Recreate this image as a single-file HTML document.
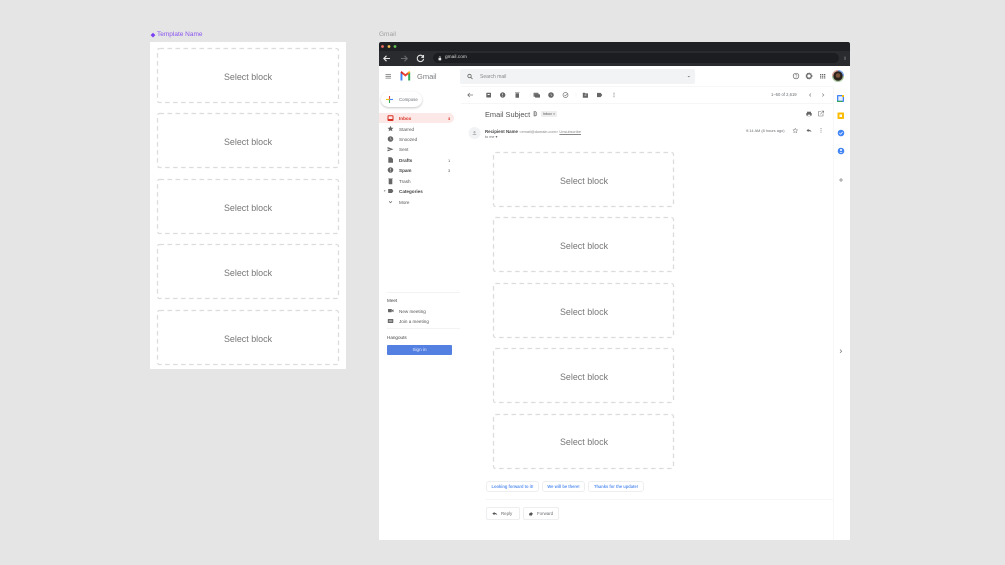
<!DOCTYPE html>
<html><head><meta charset="utf-8">
<style>
html,body{margin:0;padding:0;background:#e5e5e5}
body{width:1005px;height:565px;position:relative;overflow:hidden;font-family:"Liberation Sans",sans-serif;color:#5f6368}
#w{position:absolute;left:0;top:0;width:1005px;height:565px;background:#e5e5e5;filter:blur(.35px)}
div,span{position:absolute;white-space:nowrap}
svg{position:absolute;left:0;top:0}
.t{font-size:4.6px;line-height:7px;color:#555}
.block{box-sizing:border-box;width:182px;height:56px;border-radius:2px;text-align:center;font-size:8.9px;color:#777;line-height:56px;letter-spacing:.02px}
.g{font-size:4.6px;line-height:6px;color:#6a6d71}
.chip{height:11px;box-sizing:border-box;border:1px solid #eceef0;border-radius:3px;font-size:4.1px;font-weight:bold;color:#5a92f0;line-height:9px;text-align:center;background:#fff}
.btn{height:13px;box-sizing:border-box;border:1px solid #eceef0;border-radius:2px;background:#fff}
</style></head><body><div id="w">
<div style="left:157px;top:31px;font-size:6.5px;line-height:8px;color:#8a55ee">Template Name</div>
<div style="left:150px;top:42px;width:196px;height:327px;background:#fff"></div>
<div style="left:379px;top:42px;width:471px;height:498px;background:#fff"></div>
<svg width="1005" height="565" style="z-index:1">
<path d="M153 32.700l2.400 2.400-2.400 2.400-2.400-2.400z" fill="#7b3ff2"/>
<g fill="none" stroke="#dcdcdc" stroke-width="1.300" stroke-dasharray="4.500 3.500">
<rect x="157.500" y="48.500" width="181" height="54" rx="2"/><rect x="157.500" y="113.500" width="181" height="54" rx="2"/><rect x="157.500" y="179.500" width="181" height="54" rx="2"/><rect x="157.500" y="244.500" width="181" height="54" rx="2"/><rect x="157.500" y="310.500" width="181" height="54" rx="2"/>
<rect x="493.500" y="152.500" width="180" height="54" rx="2"/><rect x="493.500" y="217.500" width="180" height="54" rx="2"/><rect x="493.500" y="283.500" width="180" height="54" rx="2"/><rect x="493.500" y="348.500" width="180" height="54" rx="2"/><rect x="493.500" y="414.500" width="180" height="54" rx="2"/>
</g>
</svg>
<div class="block" style="left:157px;top:49px;z-index:2">Select block</div>
<div class="block" style="left:157px;top:114px;z-index:2">Select block</div>
<div class="block" style="left:157px;top:180px;z-index:2">Select block</div>
<div class="block" style="left:157px;top:245px;z-index:2">Select block</div>
<div class="block" style="left:157px;top:311px;z-index:2">Select block</div>

<div style="left:379px;top:31px;font-size:6.5px;line-height:8px;color:#a0a0a0">Gmail</div>
<div style="left:379px;top:42px;width:471px;height:9px;background:#1f2023;border-radius:2px 2px 0 0"></div>
<div style="left:379px;top:51px;width:471px;height:15px;background:#2a2b2e"></div>
<div style="left:433px;top:53px;width:406px;height:10px;background:#1c1d20;border-radius:5px"></div>
<div style="left:445px;top:55px;font-size:4.800px;line-height:6px;color:#d8d8d8">gmail.com</div>

<div style="left:417px;top:71.500px;font-size:7.500px;line-height:10px;color:#7a7d81">Gmail</div>
<div style="left:460px;top:69px;width:235px;height:15px;background:#f1f3f4;border-radius:2px"></div>
<div class="g" style="left:480px;top:73.500px;font-size:5px;color:#888">Search mail</div>

<div style="left:381px;top:92px;width:41px;height:15px;border-radius:8px;background:#fff;box-shadow:0 1px 2px rgba(60,64,67,.3)"></div>
<div class="g" style="left:399px;top:97px;font-size:4.400px">Compose</div>
<div style="left:379px;top:113px;width:75px;height:10px;background:#fce8e6;border-radius:0 5px 5px 0"></div>
<div class="t" style="left:399px;top:115px;color:#d93025;font-weight:bold">Inbox</div>
<div class="t" style="left:448px;top:115px;color:#d93025;font-weight:bold;font-size:4px">3</div>
<div class="t" style="left:399px;top:125.500px">Starred</div>
<div class="t" style="left:399px;top:136px">Snoozed</div>
<div class="t" style="left:399px;top:146px">Sent</div>
<div class="t" style="left:399px;top:157px;font-weight:bold;color:#444">Drafts</div>
<div class="t" style="left:448px;top:157px;font-size:4px">1</div>
<div class="t" style="left:399px;top:167px;font-weight:bold;color:#444">Spam</div>
<div class="t" style="left:448px;top:167px;font-size:4px">3</div>
<div class="t" style="left:399px;top:178px">Trash</div>
<div class="t" style="left:399px;top:188px;font-weight:bold;color:#444">Categories</div>
<div class="t" style="left:399px;top:198.500px">More</div>
<div style="left:387px;top:292px;width:73px;height:1px;background:#f3f3f3"></div>
<div class="t" style="left:387px;top:297px;color:#444">Meet</div>
<div class="t" style="left:399px;top:307.500px">New meeting</div>
<div class="t" style="left:399px;top:318px">Join a meeting</div>
<div style="left:387px;top:328px;width:73px;height:1px;background:#f3f3f3"></div>
<div class="t" style="left:387px;top:334px;color:#444">Hangouts</div>
<div style="left:387px;top:345px;width:65px;height:10px;background:#5480e2;border-radius:1px;color:#dfe8fb;font-size:4.600px;line-height:10px;text-align:center">Sign in</div>

<div style="left:461px;top:86px;width:372px;height:1px;background:#f7f7f7"></div>
<div style="left:461px;top:103px;width:372px;height:1px;background:#f6f6f6"></div>
<div style="left:833px;top:86px;width:1px;height:454px;background:#f7f7f7"></div>
<div class="g" style="left:771px;top:92px;font-size:4.200px">1–50 of 2,619</div>
<div style="left:485px;top:109.500px;font-size:7.400px;line-height:9px;color:#555">Email Subject</div>
<div style="left:541px;top:111px;width:16px;height:6px;background:#eee;border-radius:1px;font-size:3.800px;line-height:6px;text-align:center;color:#555">Inbox ×</div>
<div class="t" style="left:485px;top:127.500px;font-size:4.400px;color:#444"><b>Recipient Name</b> <span style="position:static;color:#888;font-size:3.900px">&lt;email@domain.com&gt;</span> <span style="position:static;color:#888;font-size:3.900px;text-decoration:underline">Unsubscribe</span></div>
<div class="g" style="left:485px;top:133.500px;font-size:3.800px">to me ▾</div>
<div class="g" style="left:746px;top:127.500px;font-size:3.900px">9:14 AM (8 hours ago)</div>

<div class="block" style="left:493px;top:153px;z-index:2">Select block</div>
<div class="block" style="left:493px;top:218px;z-index:2">Select block</div>
<div class="block" style="left:493px;top:284px;z-index:2">Select block</div>
<div class="block" style="left:493px;top:349px;z-index:2">Select block</div>
<div class="block" style="left:493px;top:414px;z-index:2">Select block</div>

<div class="chip" style="left:486px;top:481px;width:53px">Looking forward to it!</div>
<div class="chip" style="left:542px;top:481px;width:43px">We will be there!</div>
<div class="chip" style="left:588px;top:481px;width:56px">Thanks for the update!</div>
<div style="left:486px;top:499px;width:347px;height:1px;background:#f6f6f6"></div>
<div class="btn" style="left:486px;top:507px;width:34px"></div>
<div class="btn" style="left:523px;top:507px;width:36px"></div>
<div class="g" style="left:501px;top:511px;font-size:4.400px">Reply</div>
<div class="g" style="left:537px;top:511px;font-size:4.400px">Forward</div>

<svg width="1005" height="565" style="z-index:3">
<circle cx="382.500" cy="46.500" r="1.400" fill="#ed6a5e"/><circle cx="389" cy="46.500" r="1.400" fill="#f4bf4f"/><circle cx="395" cy="46.500" r="1.400" fill="#61c554"/>
<g fill="none" stroke-width="1.100">
<path d="M390 58.500h-6m2.500-2.700l-2.700 2.700 2.700 2.700" stroke="#e6e6e6"/>
<path d="M401 58.500h6m-2.500-2.700l2.700 2.700-2.700 2.700" stroke="#6a6b6e"/>
<path d="M423 56.500a3.200 3.200 0 1 0 .6 2.300M423.500 55v2.300h-2.300" stroke="#e6e6e6"/>
</g>
<rect x="438.500" y="58" width="2.700" height="2.400" rx=".4" fill="#e6e6e6"/><path d="M439.100 58v-.8a.75.75 0 0 1 1.500 0v.8" stroke="#e6e6e6" stroke-width=".5" fill="none"/>
<path d="M845 56.500v3.500" stroke="#6a6b6e" stroke-width="1.200"/>
<path d="M385.500 74.500h5.500M385.500 76.300h5.500M385.500 78.100h5.500" stroke="#777" stroke-width=".8"/>
<path d="M400.500 80.500v-8.200l1.900 1.400v6.800z" fill="#4285f4"/><path d="M408.200 80.500v-6.800l2-1.400v8.200z" fill="#34a853"/>
<path d="M400.500 72.700l4.900 3.900 4.800-3.900-.9-1.600-3.900 3-3.900-3z" fill="#ea4335"/><path d="M400.500 72.700l1-1.600 1 .8v2z" fill="#c5221f"/><path d="M408.200 73.700v-1.800l1.100-.8.900 1.600z" fill="#fbbc04"/>
<circle cx="469.500" cy="76" r="1.700" fill="none" stroke="#666" stroke-width=".8"/><path d="M470.800 77.300l1.700 1.700" stroke="#666" stroke-width=".8"/>
<path d="M687.500 76l1.300 1.300 1.300-1.300z" fill="#777"/>
<circle cx="796" cy="76" r="2.800" fill="none" stroke="#666" stroke-width=".7"/><circle cx="796" cy="77.600" r=".35" fill="#666"/><path d="M795 75.300a1 1 0 1 1 1.300 1l-.3.500" fill="none" stroke="#666" stroke-width=".5"/>
<circle cx="809" cy="76" r="2.300" fill="none" stroke="#666" stroke-width="1.300"/><circle cx="809" cy="76" r="3.100" fill="none" stroke="#666" stroke-width=".6" stroke-dasharray="1 1"/>
<g fill="#666"><rect x="820" y="74" width="1.300" height="1.100"/><rect x="822" y="74" width="1.300" height="1.100"/><rect x="824" y="74" width="1.300" height="1.100"/><rect x="820" y="75.700" width="1.300" height="1.100"/><rect x="822" y="75.700" width="1.300" height="1.100"/><rect x="824" y="75.700" width="1.300" height="1.100"/><rect x="820" y="77.400" width="1.300" height="1.100"/><rect x="822" y="77.400" width="1.300" height="1.100"/><rect x="824" y="77.400" width="1.300" height="1.100"/></g>
<circle cx="838" cy="76" r="6" fill="#a8c7a0"/><path d="M838 70a6 6 0 0 1 6 6h-6z" fill="#7aa3e8"/><path d="M838 70a6 6 0 0 0-6 6h6z" fill="#e0a8a0"/><circle cx="838" cy="76" r="4.700" fill="#2a211c"/><circle cx="838" cy="75.500" r="2.300" fill="#7a5238"/>
<path d="M389.500 96v3.500" stroke="#ea4335" stroke-width="1.100"/><path d="M389.500 99.500V103" stroke="#34a853" stroke-width="1.100"/><path d="M386 99.500h3.500" stroke="#fbbc04" stroke-width="1.100"/><path d="M389.500 99.500h3.500" stroke="#4285f4" stroke-width="1.100"/>
<rect x="388" y="115.800" width="5" height="4.700" rx=".5" fill="none" stroke="#d93025" stroke-width="1"/><path d="M388 119h5v1.700h-5z" fill="#d93025"/>
<path d="M390.500 125.800l.9 1.900 2.100.2-1.600 1.400.5 2-1.900-1.100-1.900 1.100.5-2-1.600-1.400 2.100-.2z" fill="#666"/>
<circle cx="390.500" cy="139" r="2.800" fill="#666"/><path d="M390.500 137.400v1.800l1.300.7" stroke="#fff" stroke-width=".4" fill="none"/>
<path d="M387.500 147l6 2.200-6 2.200v-1.600l3.400-.6-3.400-.6z" fill="#666"/>
<path d="M388.300 157.300h3l1.700 1.700v3.800h-4.700z" fill="#666"/>
<circle cx="390.500" cy="170" r="2.800" fill="#666"/><rect x="390.200" y="168.300" width=".6" height="2.100" fill="#fff"/><rect x="390.200" y="171" width=".6" height=".6" fill="#fff"/>
<path d="M388.700 179h3.600v5.200h-3.600zM388.200 178.300h4.600v.5h-4.600z" fill="#666"/>
<path d="M384.300 190.300l1.600 1-1.600 1z" fill="#888" transform="rotate(90 385 191)"/>
<path d="M388.200 189h3.800l1.400 2-1.400 2h-3.800z" fill="#666"/>
<path d="M389 201.300l1.500 1.500 1.500-1.500" fill="none" stroke="#666" stroke-width=".7"/>
<rect x="388" y="309" width="3.800" height="3.200" rx=".4" fill="#666"/><path d="M392 310.300l1.500-1v3l-1.500-1z" fill="#666"/>
<rect x="387.800" y="319" width="5.500" height="4" rx=".4" fill="#666"/><path d="M388.800 320.200h3.500M388.800 321.700h3.500" stroke="#fff" stroke-width=".4"/>
<path d="M473 95h-5m1.800-2l-2 2 2 2" fill="none" stroke="#777" stroke-width=".8"/>
<rect x="486.300" y="92.800" width="4.700" height="4.700" rx=".5" fill="#666"/><rect x="487.600" y="94" width="2.100" height="1" fill="#fff"/>
<circle cx="502.700" cy="95" r="2.700" fill="#666"/><rect x="502.400" y="93.400" width=".6" height="2" fill="#fff"/><rect x="502.400" y="96" width=".6" height=".6" fill="#fff"/>
<path d="M515.500 93.200h3.500v4.600h-3.500zM515 92.500h4.500v.5H515z" fill="#666"/>
<rect x="533.500" y="92.800" width="5" height="4" rx=".6" fill="#777"/><rect x="535" y="94.300" width="5" height="3.300" rx=".6" fill="#666"/>
<circle cx="551" cy="95" r="2.800" fill="#666"/><path d="M551 93.500v1.700l1.200.7" stroke="#fff" stroke-width=".4" fill="none"/>
<circle cx="565.500" cy="95" r="2.500" fill="none" stroke="#777" stroke-width=".7"/><path d="M564.500 95l.8.8 2.200-2" fill="none" stroke="#777" stroke-width=".6"/>
<path d="M582.800 92.800h1.900l.6.6h2.700v4.300h-5.200z" fill="#666"/><rect x="584.500" y="94.700" width="1.900" height=".7" fill="#fff"/>
<path d="M597 92.900h3.600l1.700 2.100-1.700 2.100H597z" fill="#666"/>
<g fill="#777"><circle cx="614" cy="93.200" r=".55"/><circle cx="614" cy="95" r=".55"/><circle cx="614" cy="96.800" r=".55"/></g>
<path d="M530 93v4M576 93v4" stroke="#eee" stroke-width=".6"/>
<path d="M811 93.500l-1.500 1.500 1.500 1.500M822.300 93.500l1.500 1.500-1.500 1.500" fill="none" stroke="#888" stroke-width=".7"/>
<path d="M534 111.500h1.400a2.500 2.500 0 0 1 0 4.500H534zM535 111.500v4.500" fill="none" stroke="#666" stroke-width=".6"/>
<path d="M807 111.700h4v1.300h-4z" fill="#666"/><path d="M806.300 113h5.400v2.600h-5.400z" fill="#666"/><rect x="807.700" y="114.500" width="2.600" height="1.600" fill="#fff" stroke="#666" stroke-width=".3"/>
<path d="M821 111.500h-2.500v4.500h4.500v-2.300M820.300 114.300l3.200-3.200M821.500 111h2.200v2.200" fill="none" stroke="#777" stroke-width=".6"/>
<circle cx="474.500" cy="133" r="6" fill="#f1f3f4"/><path d="M472.600 135h3.800v-.7l-1.900-.7-1.900.7zM474.500 131a1.100 1.100 0 1 1-.01 2.200 1.100 1.100 0 0 1 .01-2.200z" fill="#b5b7ba"/>
<path d="M795.300 128.200l.7 1.600 1.700.1-1.300 1.100.4 1.700-1.500-.9-1.500.9.400-1.700-1.300-1.100 1.700-.1z" fill="none" stroke="#777" stroke-width=".5"/>
<path d="M806.500 130.500l2-1.700v1c1.700 0 2.700.8 3 2.400-.7-.9-1.600-1.200-3-1.100v1z" fill="#666"/>
<g fill="#777"><circle cx="821" cy="128.500" r=".5"/><circle cx="821" cy="130.300" r=".5"/><circle cx="821" cy="132.100" r=".5"/></g>
<rect x="837" y="95" width="7" height="7" rx=".7" fill="#4285f4"/><rect x="838.300" y="96.300" width="4.400" height="4.400" fill="#e8f0fe"/><path d="M842 95h2v2h-2z" fill="#fbbc04"/><path d="M837 100.800h5.500v1.200H837z" fill="#34a853"/>
<rect x="837.500" y="112.500" width="6.500" height="6.500" rx=".7" fill="#fbbc04"/><rect x="839.500" y="114.500" width="2.500" height="2.500" fill="#fff"/>
<circle cx="841" cy="133" r="3.300" fill="#4285f4"/><path d="M839.300 133l1.300 1.200 2-2.200" fill="none" stroke="#fff" stroke-width=".7"/>
<circle cx="841" cy="151" r="3.300" fill="#4285f4"/><circle cx="841" cy="150" r="1" fill="#fff"/><path d="M839.500 152.800a1.600 1.300 0 0 1 3 0z" fill="#fff"/>
<path d="M839 180h4M841 178v4" stroke="#888" stroke-width=".8"/>
<path d="M840 349.500l1.700 1.700-1.700 1.700" fill="none" stroke="#777" stroke-width=".7"/>
<path d="M492.300 513.700l2.200-1.800v1c1.600 0 2.500.8 2.800 2.300-.7-.9-1.500-1.200-2.800-1.100v1z" fill="#555"/>
<path d="M533 513.700l-2.200-1.800v1c-1 0-1.500.3-1.700 1.100v1.400h1.700v1z" fill="#555"/>
</svg>
</div></body></html>
